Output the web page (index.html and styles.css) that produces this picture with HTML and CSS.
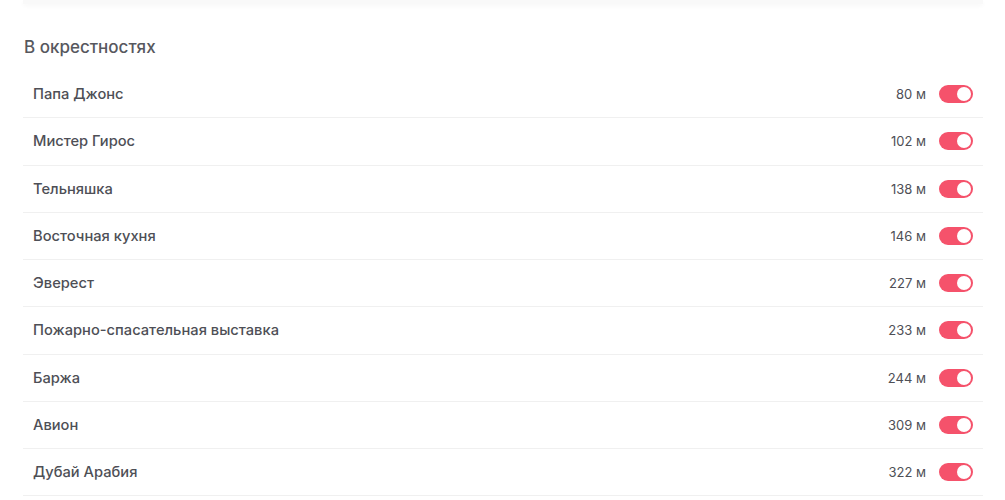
FILE: index.html
```html
<!DOCTYPE html>
<html lang="ru">
<head>
<meta charset="utf-8">
<link rel="stylesheet" href="styles.css">
</head>
<body>
<div class="page">
  <div class="card-edge"></div>
  <h2 class="section-title">В окрестностях</h2>
  <ul class="places">
    <li class="place"><span class="name">Папа Джонс</span><span class="dist">80 м</span><span class="toggle"></span></li>
    <li class="place"><span class="name">Мистер Гирос</span><span class="dist">102 м</span><span class="toggle"></span></li>
    <li class="place"><span class="name">Тельняшка</span><span class="dist">138 м</span><span class="toggle"></span></li>
    <li class="place"><span class="name">Восточная кухня</span><span class="dist">146 м</span><span class="toggle"></span></li>
    <li class="place"><span class="name">Эверест</span><span class="dist">227 м</span><span class="toggle"></span></li>
    <li class="place"><span class="name">Пожарно-спасательная выставка</span><span class="dist">233 м</span><span class="toggle"></span></li>
    <li class="place"><span class="name">Баржа</span><span class="dist">244 м</span><span class="toggle"></span></li>
    <li class="place"><span class="name">Авион</span><span class="dist">309 м</span><span class="toggle"></span></li>
    <li class="place"><span class="name">Дубай Арабия</span><span class="dist">322 м</span><span class="toggle"></span></li>
  </ul>
</div>
</body>
</html>
```
FILE: styles.css
```css
* { box-sizing: border-box; }
html, body { margin: 0; padding: 0; background: #fff; }
body { font-family: "Inter", "Noto Sans", sans-serif; color: #4e4f56; }
.page { padding: 0 22px 0 23px; }
.card-edge {
  height: 4px;
  background: #f9f9f9;
  box-shadow: 0 2px 4px rgba(0,0,0,0.03);
}
.section-title {
  margin: 0;
  padding-top: 32px;
  height: 67px;
  font-size: 17px;
  font-weight: 500;
  color: #57585e;
  padding-left: 1px;
  line-height: 22px;
}
.places { list-style: none; margin: 0; padding: 0; }
.place {
  display: flex;
  align-items: center;
  height: 47.25px;
  padding: 0 10px;
  border-bottom: 1px solid #f0f0f0;
}
.name { flex: 1; font-size: 14.7px; font-weight: 500; }
.dist { font-size: 13px; font-weight: 400; margin-right: 13px; color: #4e4f56; }
.toggle {
  position: relative;
  width: 34px;
  height: 18px;
  border-radius: 9px;
  background: #f5526b;
}
.toggle::after {
  content: "";
  position: absolute;
  right: 2px;
  top: 2px;
  width: 14px;
  height: 14px;
  border-radius: 50%;
  background: #fff;
}
```
